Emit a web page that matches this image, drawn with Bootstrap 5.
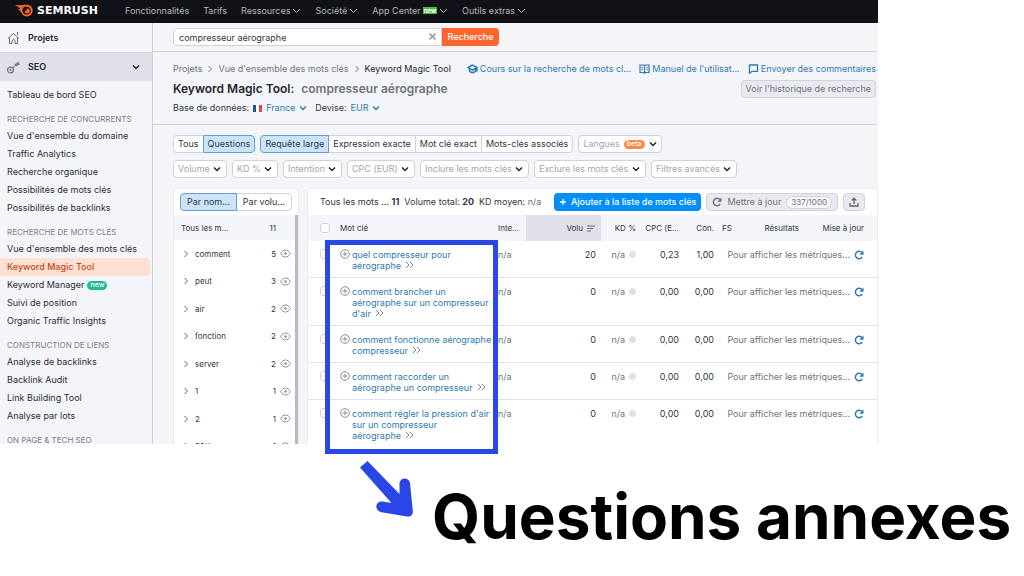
<!DOCTYPE html>
<html lang="fr">
<head>
<meta charset="utf-8">
<meta name="viewport" content="width=device-width, initial-scale=1">
<title>Keyword Magic Tool</title>
<link href="https://cdn.jsdelivr.net/npm/bootstrap@5.3.0/dist/css/bootstrap.min.css" rel="stylesheet">
<style>
:root{--ink:#33353d;--soft:#70737d;--line:#cfd2da;--page:#f4f5f9;--blue:#2f7bb0;--mark:#2b46e6}
body{font-family:Inter,"Liberation Sans",sans-serif;font-size:9px;line-height:12px;color:var(--ink);background:#fff;overflow-x:hidden}
a{text-decoration:none;color:inherit}
svg{flex:none;display:block}
button,input,select{font:inherit}
.shot{position:relative}
.app{width:86%;max-width:calc(100% - 146px);height:77vh;overflow:hidden;background:var(--page)}
.topbar{height:23px;background:#111217;color:#b4b6bb;padding:0 14px 2px 15px}
.topbar nav{gap:14px;margin-left:27px}
.topbar nav a{display:flex;align-items:center;gap:2px}
.brand{font:bold 11px/14px "DejaVu Sans",sans-serif;color:#fff;gap:3px}
.tag-new{background:#4fb944;color:#fff;font-size:6px;line-height:7px;padding:0 1px;font-weight:700}
.side{width:153px;flex:none;border-right:1px solid var(--line)}
.side-row{height:29px;padding:0 12px 0 7px;gap:8px;font-weight:600;color:#25262d}
.side-row.open{background:#dfe0e9;border-top:1px solid #d5d7de;margin-bottom:5px}
.side a.entry{display:flex;align-items:center;height:18px;padding-left:7px;gap:3px;color:#2b2d35}
.side a.entry.current{background:#ffe1d3;color:#c5481b;border-radius:0 4px 4px 0;margin-right:2px;font-weight:500}
.side h2{font-size:8px;line-height:16px;margin:0;padding:7px 0 0 7px;color:#7d808a;font-weight:400}
.pill{border-radius:6px;color:#fff;font-size:7px;line-height:8px;padding:0 3px 1px;font-weight:500}
.pill.green{background:#20bd92}
.pill.orange{background:#ff8a45}
.searchbar{height:29px;padding-left:20px;border-bottom:1px solid #d3d5dd}
.searchbar .field{width:269px;position:relative}
.searchbar input{width:100%;height:18px;border:1px solid var(--line);border-radius:4px 0 0 4px;padding:0 5px;color:var(--ink);background:#fff}
.searchbar .clear{position:absolute;right:5px;top:4px;border:0;background:none;padding:0}
.searchbar .go{height:18px;width:57px;border:0;border-radius:0 4px 4px 0;background:#ff642d;color:#fff;font-weight:500;padding:0}
.head{padding:10px 2px 0 20px;height:73px;border-bottom:1px solid #d3d5dd}
.crumbs{height:14px;color:var(--soft)}
.crumbs .trail{gap:5px}
.crumbs .here{color:#25262d}
.head a.help{display:flex;align-items:center;gap:2px;color:var(--blue)}
.head h1{font-size:12px;line-height:18px;margin:0;font-weight:600;color:#25262d}
.head h1 span{color:#6f727e;margin-left:4px}
.ghost{height:18px;border:1px solid var(--line);border-radius:4px;background:#e9eaf0;color:var(--soft);padding:0 4px}
.plain-select{border:0;background:transparent url("data:image/svg+xml,%3Csvg xmlns='http://www.w3.org/2000/svg' viewBox='0 0 8 8'%3E%3Cpath d='M1 2.5l3 3 3-3' fill='none' stroke='%232f7bb0' stroke-width='1.5'/%3E%3C/svg%3E") right center/8px no-repeat;appearance:none;color:var(--blue);padding:0 11px 0 0}
.seg,.pick{height:18px;border:1px solid var(--line);background:#fff;color:var(--ink);padding:0 4px;white-space:nowrap;line-height:16px}
.seg+.seg{margin-left:-1px}
.seg:first-child{border-radius:4px 0 0 4px}
.seg:last-child{border-radius:0 4px 4px 0}
.seg.on{background:#cbe4fd;border-color:#6c9ec9;position:relative}
.pick{border-radius:4px;color:#a3a6af;appearance:none}
select.pick{padding-right:16px;background:#fff url("data:image/svg+xml,%3Csvg xmlns='http://www.w3.org/2000/svg' viewBox='0 0 8 8'%3E%3Cpath d='M1 2.5l3 3 3-3' fill='none' stroke='%2325262d' stroke-width='1.5'/%3E%3C/svg%3E") right 5px center/8px no-repeat}
.filters{gap:7px;padding:10px 0 10px 20px}
.filters .line{gap:5px}
.panels{padding-left:20px;gap:8px}
.panel{background:#fff;border:1px solid #eaebf0;border-bottom:0;border-radius:4px 4px 0 0}
.groups{width:126px;flex:none}
.groups .switch{padding:4px 6px;height:26px}
.groups .scroller{border-right:3px solid #b9bac1}
.groups .total{height:25px;background:var(--page);padding:0 19px 0 7px;font-size:8px}
.groups ul{height:220px;font-size:8px}
.groups li{gap:4px;padding:0 4px 0 9px}
.groups li b{font-weight:400;padding-left:2px}
.groups svg{color:#62656f}
.results{min-width:0}
.toolbar-row{height:26px;padding:0 12px;gap:5px}
.toolbar-row .add{height:18px;border:0;border-radius:4px;background:#008ff8;color:#fff;font-weight:500;padding:0 5px;gap:4px}
.toolbar-row .ghost{gap:5px;padding:0 5px}
.quota{border:1px solid var(--line);border-radius:7px;background:#f7f7fa;padding:0 4px;font-size:8px;line-height:11px}
.kw{table-layout:fixed;width:100%;border-collapse:separate;border-spacing:0}
.kw th{height:26px;background:var(--page);font-size:8px;font-weight:400;padding:0;white-space:nowrap;vertical-align:middle}
.kw th.sorted{background:#dfe0e9;padding-right:6px}
.kw td{vertical-align:top;line-height:11px;padding:8px 0 6px;border-bottom:1px solid #e0e2e9}
.kw td a{color:var(--blue)}
.kw .box{appearance:none;width:10px;height:10px;border:1px solid var(--line);border-radius:3px;background:#fff;display:block;margin:0 0 0 12px}
.kw .term{gap:2px;white-space:nowrap}
.kw .upd{gap:4px;padding-right:13px;white-space:nowrap}
.kw .num{padding-right:5px}
.muted-cell{color:var(--soft)}
.dot{width:7px;height:7px;border-radius:50%;background:#e0e1ea}
.frame-mark{position:absolute;left:325px;top:240px;width:173px;height:214px;border:5px solid var(--mark)}
.callout{padding:17px 0 0 360px;gap:18px}
.callout p{font-size:62px;line-height:72px;font-weight:700;color:#000;margin:20px 0 0;white-space:nowrap}
</style>
</head>
<body>
<svg class="d-none">
  <symbol id="down" viewBox="0 0 8 8"><path d="M1 2.500l3 3 3-3" fill="none" stroke="currentColor" stroke-width="1.500"/></symbol>
  <symbol id="thin" viewBox="0 0 9 8"><path d="M1 2l3.500 3.500L8 2" fill="none" stroke="currentColor" stroke-width="1"/></symbol>
  <symbol id="right" viewBox="0 0 6 8"><path d="M1.500 1l3 3-3 3" fill="none" stroke="currentColor" stroke-width="1"/></symbol>
  <symbol id="eye" viewBox="0 0 11 9"><path d="M.7 4.500C2 2 3.600 1 5.500 1s3.500 1 4.800 3.500C9 7 7.400 8 5.500 8S2 7 .7 4.500z" fill="none" stroke="#8d9099" stroke-width="1"/><circle cx="5.500" cy="4.500" r="1.300" fill="#8d9099"/></symbol>
  <symbol id="plus" viewBox="0 0 10 10"><circle cx="5" cy="5" r="4.300" fill="none" stroke="#8a8d96"/><path d="M5 2.700v4.600M2.700 5h4.600" stroke="#8a8d96"/></symbol>
  <symbol id="chev2" viewBox="0 0 9 8"><path d="M1 1l3 3-3 3M5 1l3 3-3 3" fill="none" stroke="#858892" stroke-width="1"/></symbol>
  <symbol id="again" viewBox="0 0 10 10"><path d="M8.200 7A3.700 3.700 0 1 1 7.900 2.600" fill="none" stroke="currentColor" stroke-width="1.500"/><path d="M9.500.5v4.200H5.300z" fill="currentColor"/></symbol>
</svg>
<main class="shot">
  <div class="app d-flex flex-column">
    <header class="topbar d-flex align-items-center flex-shrink-0">
      <a href="#" class="brand d-flex align-items-center">
        <svg width="19" height="13" viewBox="0 0 19 13"><path d="M0 1C5 1.500 8 .6 12 .7a5.800 5.800 0 1 1-5.700 7.500L4 7.300l2 .1L2.500 4.700l3 .6C4.500 3.500 2 2.500 0 1z" fill="#ff642d"/><path d="M10 2.500a4.200 4.200 0 1 0 5.800 4.400A4.300 4.300 0 0 0 12 2.700z" fill="#111217"/><path d="M12.300 4.200a2.600 2.600 0 1 1-2.700 2.800c1.500.1 2.700-1 2.700-2.800z" fill="#ff642d"/></svg>
        <span>SEMRUSH</span></a>
      <nav class="d-flex">
        <a href="#">Fonctionnalités</a><a href="#">Tarifs</a>
        <a href="#">Ressources <svg width="9" height="8"><use href="#thin"/></svg></a>
        <a href="#">Société <svg width="9" height="8"><use href="#thin"/></svg></a>
        <a href="#">App Center <span class="tag-new">new</span><svg width="9" height="8"><use href="#thin"/></svg></a>
        <a href="#">Outils extras <svg width="9" height="8"><use href="#thin"/></svg></a>
      </nav>
    </header>
    <div class="d-flex flex-grow-1">
      <aside class="side">
        <a href="#" class="side-row d-flex align-items-center">
          <svg width="13" height="14" viewBox="0 0 13 14"><path d="M1 7.500L6.500 2.500 12 7.500M2.500 6.500V12.500H5V9.500q1.500-2 3 0v3h2.500V6.500M10.500 1v3" fill="none" stroke="#6a6d76"/></svg>Projets</a>
        <a href="#" class="side-row open d-flex align-items-center">
          <svg width="13" height="13" viewBox="0 0 13 13"><circle cx="3.500" cy="9" r="2.900" fill="none" stroke="#6a6d76" stroke-width="1.200"/><circle cx="3.500" cy="9" r="1" fill="#6a6d76"/><path d="M6 6.500L9 4" fill="none" stroke="#6a6d76"/><path d="M7.500 3.500L11.500.5l1.300 3-4 2z" fill="#7a7d87"/></svg>SEO
          <svg class="ms-auto" width="8" height="8"><use href="#down"/></svg></a>
        <a href="#" class="entry">Tableau de bord SEO</a>
        <h2>RECHERCHE DE CONCURRENTS</h2>
        <a href="#" class="entry">Vue d'ensemble du domaine</a><a href="#" class="entry">Traffic Analytics</a><a href="#" class="entry">Recherche organique</a><a href="#" class="entry">Possibilités de mots clés</a><a href="#" class="entry">Possibilités de backlinks</a>
        <h2>RECHERCHE DE MOTS CLÉS</h2>
        <a href="#" class="entry">Vue d'ensemble des mots clés</a><a href="#" class="entry current">Keyword Magic Tool</a><a href="#" class="entry">Keyword Manager <span class="pill green">new</span></a><a href="#" class="entry">Suivi de position</a><a href="#" class="entry">Organic Traffic Insights</a>
        <h2>CONSTRUCTION DE LIENS</h2>
        <a href="#" class="entry">Analyse de backlinks</a><a href="#" class="entry">Backlink Audit</a><a href="#" class="entry">Link Building Tool</a><a href="#" class="entry">Analyse par lots</a>
        <h2>ON PAGE &amp; TECH SEO</h2>
      </aside>
      <div class="flex-grow-1 results">
        <form class="searchbar d-flex align-items-center">
          <div class="field"><input type="text" aria-label="Mot clé" value="compresseur aérographe"><button type="button" class="clear" aria-label="Effacer"><svg width="9" height="9" viewBox="0 0 9 9"><path d="M1.500 1.500l6 6m0-6l-6 6" stroke="#8a8d96" stroke-width="1.300"/></svg></button></div>
          <button type="button" class="go">Recherche</button>
        </form>
        <section class="head">
          <div class="crumbs d-flex align-items-center">
            <div class="trail d-flex align-items-center"><a href="#">Projets</a><svg width="6" height="8"><use href="#right"/></svg><a href="#">Vue d'ensemble des mots clés</a><svg width="6" height="8"><use href="#right"/></svg><span class="here">Keyword Magic Tool</span></div>
            <div class="d-flex flex-grow-1 justify-content-between ms-3">
              <a href="#" class="help"><svg width="11" height="10" viewBox="0 0 11 10"><path d="M5.500 1L1 3.500l4.500 2.600L10 3.500zM2.500 4.500V7.300q3 2.700 6 0V4.500M10 3.500v4" fill="none" stroke="currentColor" stroke-width="1.500"/></svg>Cours sur la recherche de mots cl...</a>
              <a href="#" class="help"><svg width="11" height="10" viewBox="0 0 11 10"><path d="M1 1h3.500l1 .7 1-.7H10v7.500H6.500l-1 .8-1-.8H1zM5.500 1.500v7.500M2.300 3.500h1.500M2.300 5.500h1.500M7.200 3.500h1.500M7.200 5.500h1.500" fill="none" stroke="currentColor" stroke-width="1.200"/></svg>Manuel de l'utilisat...</a>
              <a href="#" class="help"><svg width="11" height="10" viewBox="0 0 11 10"><path d="M1.500 1h8v6.300H4L1.500 9.200z" fill="none" stroke="currentColor" stroke-width="1.300"/></svg>Envoyer des commentaires</a>
            </div>
          </div>
          <div class="d-flex justify-content-between mt-1"><h1>Keyword Magic Tool: <span>compresseur aérographe</span></h1><button class="ghost">Voir l'historique de recherche</button></div>
          <div class="d-flex align-items-center mt-1">
            <label for="base" class="me-1">Base de données:</label>
            <svg class="me-1" width="9" height="7"><path d="M0 0h3v7H0z" fill="#24508f"/><path d="M3 0h3v7H3z" fill="#fff"/><path d="M6 0h3v7H6z" fill="#e2483d"/></svg>
            <select id="base" class="plain-select"><option>France</option></select>
            <label for="cur" class="ms-2 me-1">Devise:</label>
            <select id="cur" class="plain-select"><option>EUR</option></select>
          </div>
        </section>
        <section class="filters d-flex flex-column">
          <div class="line d-flex">
            <div class="d-flex"><button class="seg">Tous</button><button class="seg on">Questions</button></div>
            <div class="d-flex"><button class="seg on">Requête large</button><button class="seg">Expression exacte</button><button class="seg">Mot clé exact</button><button class="seg">Mots-clés associés</button></div>
            <button class="pick d-flex align-items-center gap-1">Langues <span class="pill orange">beta</span><svg width="8" height="8" color="#25262d"><use href="#down"/></svg></button>
          </div>
          <div class="line d-flex">
            <select class="pick" aria-label="Volume"><option>Volume</option></select>
            <select class="pick" aria-label="KD"><option>KD %</option></select>
            <select class="pick" aria-label="Intention"><option>Intention</option></select>
            <select class="pick" aria-label="CPC"><option>CPC (EUR)</option></select>
            <select class="pick" aria-label="Inclure"><option>Inclure les mots clés</option></select>
            <select class="pick" aria-label="Exclure"><option>Exclure les mots clés</option></select>
            <select class="pick" aria-label="Filtres"><option>Filtres avancés</option></select>
          </div>
        </section>
        <section class="panels d-flex">
          <div class="panel groups">
            <div class="switch d-flex"><button class="seg on flex-fill">Par nom...</button><button class="seg flex-fill">Par volu...</button></div>
            <div class="scroller">
              <div class="total d-flex align-items-center justify-content-between"><span>Tous les m...</span><span>11</span></div>
              <ul id="groups" class="list-unstyled d-flex flex-column m-0"></ul>
            </div>
          </div>
          <div class="panel results flex-grow-1">
            <div class="toolbar-row d-flex align-items-center text-nowrap">
              <span>Tous les mots ... <b>11</b></span><span>Volume total: <b>20</b></span><span>KD moyen: <span class="muted-cell">n/a</span></span>
              <button class="add d-flex align-items-center ms-auto"><svg width="8" height="8" viewBox="0 0 8 8"><path d="M4 1v6M1 4h6" stroke="#fff" stroke-width="1.300"/></svg>Ajouter à la liste de mots clés</button>
              <button class="ghost d-flex align-items-center"><svg width="10" height="10"><use href="#again"/></svg>Mettre à jour <span class="quota">337/1000</span></button>
              <button class="ghost d-flex align-items-center" aria-label="Exporter"><svg width="10" height="10" viewBox="0 0 10 10"><path d="M5 7V1.500M2.700 3.500L5 1.200l2.300 2.300M1 6v3h8V6" fill="none" stroke="#62656f" stroke-width="1.300"/></svg></button>
            </div>
            <table class="kw">
              <colgroup><col style="width:32px"><col style="width:158px"><col style="width:28px"><col><col style="width:35px"><col style="width:43px"><col style="width:35px"><col style="width:27px"><col style="width:58px"><col style="width:78px"></colgroup>
              <thead><tr><th><input type="checkbox" class="box" aria-label="Tout choisir"></th><th>Mot clé</th><th>Inte...</th><th class="sorted"><span class="d-flex align-items-center justify-content-end gap-1">Volu<svg width="8" height="7"><path d="M0 1h8M0 3.500h6M0 6h4" stroke="#6a6d76" stroke-width="1.200"/></svg></span></th><th class="text-end">KD %</th><th class="text-end">CPC (E...</th><th class="text-end">Con.</th><th class="ps-2">FS</th><th class="text-end">Résultats</th><th class="text-end upd">Mise à jour</th></tr></thead>
              <tbody id="rows"></tbody>
            </table>
          </div>
        </section>
      </div>
    </div>
  </div>
  <div class="frame-mark"></div>
</main>
<section class="callout d-flex align-items-start">
  <svg width="54" height="58" viewBox="0 0 54 58"><path d="M7.500 0L0 6.500 31.500 42l-9-1.500c-7-1-9 9-1 10.700L47 55.500c4 .5 6-2 5.800-5.500L50 22c-1-6.500-10.500-6-10.500 1v10z" fill="#2b46e6"/></svg>
  <p>Questions annexes</p>
</section>
<script src="https://cdn.jsdelivr.net/npm/bootstrap@5.3.0/dist/js/bootstrap.bundle.min.js"></script>
<script>
const groups=[["comment",5],["peut",3],["air",2],["fonction",2],["server",2],["1",1],["2",1],["50l/s",1]];
document.getElementById("groups").innerHTML=groups.map(([g,n])=>`<li class="d-flex flex-fill align-items-center"><svg width="6" height="8"><use href="#right"/></svg><b>${g}</b><span class="ms-auto">${n}</span><svg width="11" height="9"><use href="#eye"/></svg></li>`).join("");
const data=[["quel compresseur pour<br>aérographe","20","0,23","1,00"],["comment brancher un<br>aérographe sur un compresseur<br>d'air","0","0,00","0,00"],["comment fonctionne aérographe<br>compresseur","0","0,00","0,00"],["comment raccorder un<br>aérographe un compresseur","0","0,00","0,00"],["comment régler la pression d'air<br>sur un compresseur<br>aérographe","0","0,00","0,00"]];
document.getElementById("rows").innerHTML=data.map(([k,v,c,n])=>`<tr>
<td><input type="checkbox" class="box" aria-label="Choisir"></td>
<td><div class="term d-flex"><svg width="10" height="10"><use href="#plus"/></svg><a href="#">${k}<svg class="d-inline-block align-baseline ms-1" width="9" height="8"><use href="#chev2"/></svg></a></div></td>
<td class="muted-cell">n/a</td><td class="text-end num">${v}</td>
<td class="muted-cell"><div class="d-flex align-items-center justify-content-end gap-1">n/a <span class="dot"></span></div></td>
<td class="text-end">${c}</td><td class="text-end">${n}</td>
<td colspan="3" class="muted-cell"><div class="upd d-flex align-items-center justify-content-end">Pour afficher les métriques... <a href="#" aria-label="Actualiser"><svg width="10" height="10"><use href="#again"/></svg></a></div></td></tr>`).join("");
</script>
</body>
</html>
